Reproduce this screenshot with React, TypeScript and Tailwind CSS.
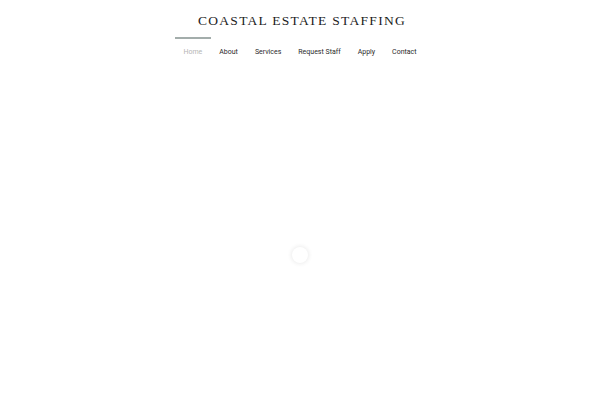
import React from "react";

const items = ["Home", "About", "Services", "Request Staff", "Apply", "Contact"];

export default function App() {
  return (
    <div className="w-[600px] h-[400px] bg-white overflow-hidden flex flex-col items-center">
      <h1
        className="mt-[12px] ml-[4px] text-[13.5px] leading-[18px] tracking-[0.095em] text-[#1c1c1c] uppercase"
        style={{ fontFamily: '"Liberation Serif", "DejaVu Serif", serif' }}
      >
        Coastal Estate Staffing
      </h1>
      <nav className="mt-[7px] flex" style={{ fontFamily: 'Roboto, "Liberation Sans", sans-serif' }}>
        {items.map((it, i) => (
          <a
            key={it}
            className={
              "relative px-[8.5px] pt-[9px] text-[7px] leading-[12px] " +
              (i === 0 ? "text-[#b5b5b5]" : "text-[#2a2a2a]")
            }
          >
            {i === 0 && <span className="absolute left-0 right-0 top-0 h-[2px] bg-[#a3adab]" />}
            {it}
          </a>
        ))}
      </nav>
      <div className="mt-[189px] w-[16px] h-[16px] rounded-full bg-white shadow-[0_0_4px_1px_rgba(0,0,0,0.08)]" />
    </div>
  );
}
